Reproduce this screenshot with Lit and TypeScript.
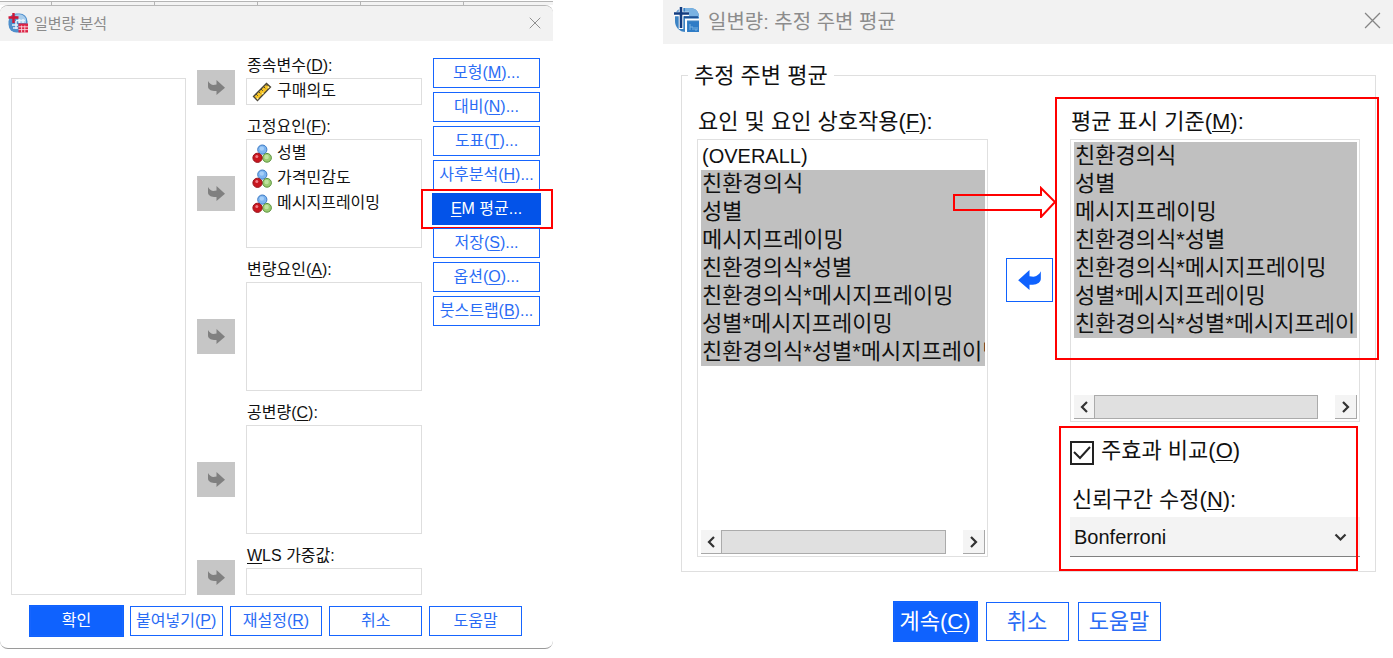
import { LitElement, html, css, svg, nothing, TemplateResult } from "lit";
import { customElement, property } from "lit/decorators.js";
import { classMap } from "lit/directives/class-map.js";

/* Splits "text(_D):" style captions: the character after "_" is the access key. */
const caption = (text: string): TemplateResult => {
  const at = text.indexOf("_");
  if (at < 0) return html`${text}`;
  return html`${text.slice(0, at)}<u>${text[at + 1]}</u>${text.slice(at + 2)}`;
};

const base = css`
  * { box-sizing: border-box; }
  :host {
    display: block;
    font-family: "Liberation Sans", "Noto Sans CJK KR", sans-serif;
    color: #111;
  }
  button, select, input { font: inherit; margin: 0; }
  ul { list-style: none; margin: 0; padding: 0; }
  u { text-underline-offset: 2px; text-decoration-thickness: 1px; text-decoration-skip-ink: none; }
  .btn {
    display: block;
    width: 100%;
    padding: 0;
    border: 1px solid #1665ff;
    border-radius: 0;
    background: #fff;
    color: #2a6cf5;
    white-space: nowrap;
    text-align: center;
  }
  .btn.primary { background: #0f62fe; color: #fff; box-shadow: 0 0 0 1px #0f62fe; }
  .btn.active { background: #0353e9; border-color: #0353e9; color: #fff; box-shadow: 0 0 0 1px #0353e9; }
  .titlebar { display: flex; align-items: center; background: #f2f2f2; color: #8c8c8c; }
  .titlebar h1 { flex: 1; margin: 0; font-weight: 400; }
  .close { border: 0; padding: 0; background: none; display: flex; }
  .mark { position: absolute; border: 2px solid #f00; pointer-events: none; }
`;

const closeIcon = (size: number) => html`
  <svg width=${size} height=${size} viewBox="0 0 16 16" fill="none" stroke="#858585" stroke-width="1.2">
    <path d="M1 1L15 15M15 1L1 15" />
  </svg>`;

const rulerIcon = html`
  <svg width="20" height="20" viewBox="0 0 20 20">
    <path d="M1.500 14.500L14.500 1.500L18.500 5L5.500 18.500Z" fill="#f6c425" stroke="#4a463a" stroke-width="1.300" />
    <path d="M4 12l1.800 1.800M6.500 9.500l1.800 1.800M9 7l1.800 1.800M11.500 4.500l1.800 1.800M14 2.500l1.500 1.500" stroke="#4a463a" stroke-width="1" />
    <path d="M5 16l1.200 1.200M15.800 4.800l1.200 1.200M10 11.500l1.500 0" stroke="#fff2a8" stroke-width="1.400" />
  </svg>`;

const nominalIcon = html`
  <svg width="20" height="20" viewBox="0 0 20 20">
    <circle cx="10.300" cy="5.600" r="4.600" fill="#7db5f0" stroke="#3d7ac4" />
    <circle cx="9.800" cy="4.600" r="2.200" fill="#a6cff8" />
    <circle cx="15" cy="13.800" r="4.400" fill="#9ccb72" stroke="#5c9440" />
    <circle cx="14.600" cy="13" r="2.200" fill="#c0e3a0" />
    <circle cx="5.500" cy="13.800" r="4.600" fill="#c8161f" stroke="#961018" />
    <circle cx="4.800" cy="12.400" r="1.500" fill="#f08088" />
  </svg>`;

const arrowShape = svg`<path d="M0 1C1 3.300 3.500 5 5.500 5L8.500 4.600V0L17 7.700L8.500 15V11H6C2.500 10.800 0 9 0 6.500Z" />`;

@customElement("variable-target")
class VariableTarget extends LitElement {
  @property() label = "";
  @property() icon = "";
  @property({ attribute: false }) items: string[] = [];
  @property({ type: Boolean, reflect: true }) single = false;

  static styles = [base, css`
    :host { display: grid; grid-template-columns: 38px minmax(0, 1fr); column-gap: 11px; font-size: 16px; }
    .move {
      grid-row: 2;
      align-self: center;
      display: flex;
      align-items: center;
      justify-content: center;
      height: 35px;
      padding: 0;
      border: 0;
      background: #c6c6c6;
    }
    :host([single]) .move { grid-row: 1 / 3; align-self: end; }
    .name { grid-column: 2; grid-row: 1; line-height: 28px; height: 26px; padding-left: 1px; white-space: nowrap; }
    .box { grid-column: 2; grid-row: 2; height: 109px; border: 1px solid #dedede; padding: 1px 5px; }
    :host([single]) .box { height: 27px; padding: 0 5px; }
    .row { display: flex; align-items: center; gap: 5px; height: 25px; line-height: 20px; white-space: nowrap; }
    .row span { height: 22px; }
  `];

  render() {
    return html`
      <span class="name" id="name">${caption(this.label)}</span>
      <button class="move" aria-label="이동" disabled>
        <svg width="17" height="15" viewBox="0 0 17 15" fill="#808080">${arrowShape}</svg>
      </button>
      <ul class="box" role="listbox" aria-labelledby="name">
        ${this.items.map((item) => html`
          <li class="row" role="option">${this.icon === "scale" ? rulerIcon : nominalIcon}<span>${item}</span></li>`)}
      </ul>`;
  }
}

@customElement("univariate-dialog")
class UnivariateDialog extends LitElement {
  private side = ["모형(_M)...", "대비(_N)...", "도표(_T)...", "사후분석(_H)...", "_EM 평균...", "저장(_S)...", "옵션(_O)...", "붓스트랩(_B)..."];
  private actions = ["확인", "붙여넣기(_P)", "재설정(_R)", "취소", "도움말"];

  static styles = [base, css`
    :host { font-size: 16px; }
    .sheet {
      height: 5px;
      border-top: 1px solid #fff;
      background: repeating-linear-gradient(to right, transparent 0 51px, #b5b5b5 51px 52px, transparent 52px 103px) 0 1px,
        linear-gradient(#b5b5b5, #b5b5b5) 0 0 / 100% 1px no-repeat, #f4f4f4;
    }
    .window { border-top: 1px solid #b8b8b8; border-bottom: 1px solid #9a9a9a; border-radius: 8px; background: #fff; }
    .titlebar { height: 35px; padding: 0 12px 2px 8px; gap: 6px; border-radius: 8px 8px 0 0; }
    .titlebar h1 { font-size: 15px; }
    .body {
      display: grid;
      grid-template-columns: minmax(0, 175fr) minmax(0, 225fr) 107px;
      column-gap: 11px;
      padding: 11px 13px 0 11px;
    }
    .source { margin-top: 26px; border: 1px solid #dedede; }
    .targets { display: flex; flex-direction: column; gap: 8px; }
    .side { display: flex; flex-direction: column; gap: 4px; padding-top: 6px; }
    .slot { position: relative; }
    .slot .mark { inset: -5px -13px -5px -12px; }
    .btn { height: 30px; line-height: 28px; }
    .actions { display: grid; grid-template-columns: repeat(5, minmax(0, 1fr)); gap: 7px; padding: 11px 31px 12px 30px; }
  `];

  render() {
    return html`
      <div class="sheet"></div>
      <section class="window" role="dialog" aria-labelledby="title">
        <header class="titlebar">
          <svg width="20" height="20" viewBox="0 0 20 20">
            <rect x="0.500" y="0.500" width="19" height="19" rx="8" fill="#4f8fcc" />
            <path d="M6 2C10 0.500 16 1 18 6V10H10V4Z" fill="#a9cdec" />
            <path d="M4 12h6M5 15h5M8 8v8M11.500 6v4M15 6v4M8 7.500h9" stroke="#e4f1fb" stroke-width="1.500" />
            <path d="M5.500 0v10M0.500 4.500h10" stroke="#cf1736" stroke-width="2.400" />
            <rect x="10.500" y="10.500" width="9.500" height="9" fill="#dd2445" />
            <path d="M10.500 13.800h9.500M10.500 16.600h9.500M13.600 12.500v7M16.800 12.500v7" stroke="#fbd5dc" stroke-width="0.900" />
          </svg>
          <h1 id="title">일변량 분석</h1>
          <button class="close" aria-label="닫기">${closeIcon(12)}</button>
        </header>
        <div class="body">
          <ul class="source" role="listbox" aria-label="변수"></ul>
          <div class="targets">
            <variable-target single label="종속변수(_D):" icon="scale" .items=${["구매의도"]}></variable-target>
            <variable-target label="고정요인(_F):" icon="nominal" .items=${["성별", "가격민감도", "메시지프레이밍"]}></variable-target>
            <variable-target label="변량요인(_A):"></variable-target>
            <variable-target label="공변량(_C):"></variable-target>
            <variable-target single label="_WLS 가중값:"></variable-target>
          </div>
          <div class="side">
            ${this.side.map((text) => {
              const active = text.startsWith("_EM");
              return html`<div class="slot">
                <button class=${classMap({ btn: true, active })}>${caption(text)}</button>
                ${active ? html`<span class="mark"></span>` : nothing}
              </div>`;
            })}
          </div>
        </div>
        <footer class="actions">
          ${this.actions.map((text, i) => html`<button class=${classMap({ btn: true, primary: i === 0 })}>${caption(text)}</button>`)}
        </footer>
      </section>`;
  }
}

@customElement("effect-list")
class EffectList extends LitElement {
  @property() label = "";
  @property({ attribute: false }) items: string[] = [];

  static styles = [base, css`
    :host { display: flex; flex-direction: column; font-size: 22px; }
    .name { height: 34px; line-height: 34px; padding-left: 1px; white-space: nowrap; }
    .box { flex: 1; display: flex; flex-direction: column; justify-content: space-between; border: 1px solid #e0e0e0; padding: 2px 2px 2px 3px; }
    .row { height: 28px; line-height: 28px; padding-left: 1px; white-space: nowrap; overflow: hidden; }
    .row.selected { background: #c0c0c0; }
    .latin { font-size: 20px; }
    .scroll { display: grid; grid-template-columns: 20px minmax(0, 1fr) 22px; height: 24px; }
    .step { display: flex; align-items: center; justify-content: center; padding: 0; border: 0; border-bottom: 1px solid #a8a8a8; background: #f4f4f4; }
    .step.next { border-right: 1px solid #a8a8a8; }
    .thumb { margin-right: 17px; border: 1px solid #ababab; background: #e0e0e0; }
  `];

  render() {
    return html`
      <span class="name" id="name">${caption(this.label)}</span>
      <div class="box">
        <ul role="listbox" aria-labelledby="name" aria-multiselectable="true">
          ${this.items.map((item) => {
            const latin = item.startsWith("(");
            return html`<li class=${classMap({ row: true, selected: !latin, latin })} role="option" aria-selected=${!latin}>${item}</li>`;
          })}
        </ul>
        <div class="scroll">
          <button class="step" aria-label="왼쪽"><svg width="8" height="12" viewBox="0 0 8 12" fill="none" stroke="#333" stroke-width="2.200"><path d="M7 1L2 6L7 11" /></svg></button>
          <div class="thumb"></div>
          <button class="step next" aria-label="오른쪽"><svg width="8" height="12" viewBox="0 0 8 12" fill="none" stroke="#333" stroke-width="2.200"><path d="M1 1L6 6L1 11" /></svg></button>
        </div>
      </div>`;
  }
}

@customElement("means-dialog")
class MeansDialog extends LitElement {
  private effects = [
    "친환경의식",
    "성별",
    "메시지프레이밍",
    "친환경의식*성별",
    "친환경의식*메시지프레이밍",
    "성별*메시지프레이밍",
    "친환경의식*성별*메시지프레이밍",
  ];

  static styles = [base, css`
    :host { font-size: 22px; }
    .titlebar { height: 44px; padding: 0 12px 4px 11px; gap: 8px; }
    .titlebar h1 { font-size: 20px; }
    .group { margin: 16px 17px 0 18px; padding: 0; border: 1px solid #dfdfdf; min-width: 0; }
    legend { margin-left: 6px; padding: 0 6px; line-height: 32px; height: 30px; }
    .fields { display: grid; grid-template-columns: minmax(0, 291fr) 82px minmax(0, 290fr); padding: 15px 15px 14px; }
    .move {
      align-self: start;
      justify-self: center;
      display: flex;
      align-items: center;
      justify-content: center;
      width: 47px;
      height: 44px;
      margin-top: 153px;
      padding: 0;
      border: 1px solid #0f62fe;
      background: #fff;
    }
    .display { position: relative; display: flex; flex-direction: column; }
    .display effect-list { height: 317px; }
    .display > .mark { top: -8px; left: -15px; right: -19px; height: 263px; }
    .pointer { position: absolute; top: 81px; left: -118px; pointer-events: none; }
    .options { position: relative; padding-top: 19px; }
    .options .mark { inset: 4px 2px -14px -11px; }
    .check { display: flex; align-items: center; gap: 7px; height: 24px; line-height: 24px; white-space: nowrap; }
    .check label { height: 28px; }
    .tick { position: relative; display: flex; }
    .tick input { appearance: none; width: 24px; height: 24px; border: 2px solid #222; background: #fff; }
    .tick svg { position: absolute; inset: 0; pointer-events: none; }
    .caption { display: block; margin-top: 18px; padding-left: 2px; line-height: 34px; height: 34px; white-space: nowrap; }
    .picker { position: relative; }
    .picker select {
      appearance: none;
      display: block;
      width: 100%;
      height: 40px;
      padding: 0 30px 0 4px;
      border: 0;
      border-bottom: 1px solid #808080;
      border-radius: 0;
      background: #f3f3f3;
      color: #111;
      font-size: 20px;
    }
    .picker svg { position: absolute; right: 13px; top: 16px; pointer-events: none; }
    .actions { display: flex; justify-content: center; gap: 9px; padding: 30px 2px 16px 0; }
    .btn { width: 83px; height: 39px; line-height: 37px; }
  `];

  render() {
    return html`
      <section role="dialog" aria-labelledby="title">
        <header class="titlebar">
          <svg width="26" height="26" viewBox="0 0 26 26">
            <path d="M1 10C1 4 5 1 10 1H16C22 1 25 5 25 10V25H12C5 25 1 20 1 14Z" fill="#3c83c4" />
            <path d="M11 1H16C22 1 25 5 25 10H11Z" fill="#79b2e2" />
            <path d="M7 0V22M0 7H15" stroke="#fff" stroke-width="4.600" />
            <path d="M7 0V21M0 6.500H15" stroke="#123c80" stroke-width="2.600" />
            <path d="M12 25V12.500H25" stroke="#fff" stroke-width="2" fill="none" />
            <path d="M10 10.200H24" stroke="#1c5296" stroke-width="2" />
            <rect x="14" y="15" width="11" height="10" fill="#2f7cc6" />
            <path d="M16 17V23M16 20H19V23M21 20V23H23V20" stroke="#79b2e2" fill="none" />
          </svg>
          <h1 id="title">일변량: 추정 주변 평균</h1>
          <button class="close" aria-label="닫기">${closeIcon(17)}</button>
        </header>
        <fieldset class="group">
          <legend>추정 주변 평균</legend>
          <div class="fields">
            <effect-list label="요인 및 요인 상호작용(_F):" .items=${["(OVERALL)", ...this.effects]}></effect-list>
            <button class="move" aria-label="이동">
              <svg width="23" height="20" viewBox="0 0 17 15" fill="#0f62fe"><g transform="translate(17 0) scale(-1 1)">${arrowShape}</g></svg>
            </button>
            <div class="display">
              <effect-list label="평균 표시 기준(_M):" .items=${this.effects}></effect-list>
              <div class="options">
                <div class="check">
                  <span class="tick">
                    <input type="checkbox" id="compare" checked />
                    <svg width="24" height="24" viewBox="0 0 24 24" fill="none" stroke="#222" stroke-width="2"><path d="M4 11L10 17L20 6" /></svg>
                  </span>
                  <label for="compare">${caption("주효과 비교(_O)")}</label>
                </div>
                <label class="caption" for="adjust">${caption("신뢰구간 수정(_N):")}</label>
                <div class="picker">
                  <select id="adjust"><option>Bonferroni</option></select>
                  <svg width="13" height="9" viewBox="0 0 13 9" fill="none" stroke="#333" stroke-width="2.200"><path d="M1.500 1.500L6.500 6.500L11.500 1.500" /></svg>
                </div>
                <span class="mark"></span>
              </div>
              <span class="mark"></span>
              <svg class="pointer" width="105" height="32" viewBox="0 0 105 32" fill="none" stroke="#f00" stroke-width="2">
                <path d="M2 9H89V2L103 16L89 31V24H2Z" />
              </svg>
            </div>
          </div>
        </fieldset>
        <footer class="actions">
          <button class="btn primary">${caption("계속(_C)")}</button>
          <button class="btn">취소</button>
          <button class="btn">도움말</button>
        </footer>
      </section>`;
  }
}

@customElement("app-root")
class AppRoot extends LitElement {
  static styles = css`
    :host {
      display: grid;
      grid-template-columns: minmax(0, 553fr) minmax(0, 730fr);
      column-gap: 110px;
      align-items: start;
      background: #fff;
    }
  `;

  render() {
    return html`<univariate-dialog></univariate-dialog><means-dialog></means-dialog>`;
  }
}
